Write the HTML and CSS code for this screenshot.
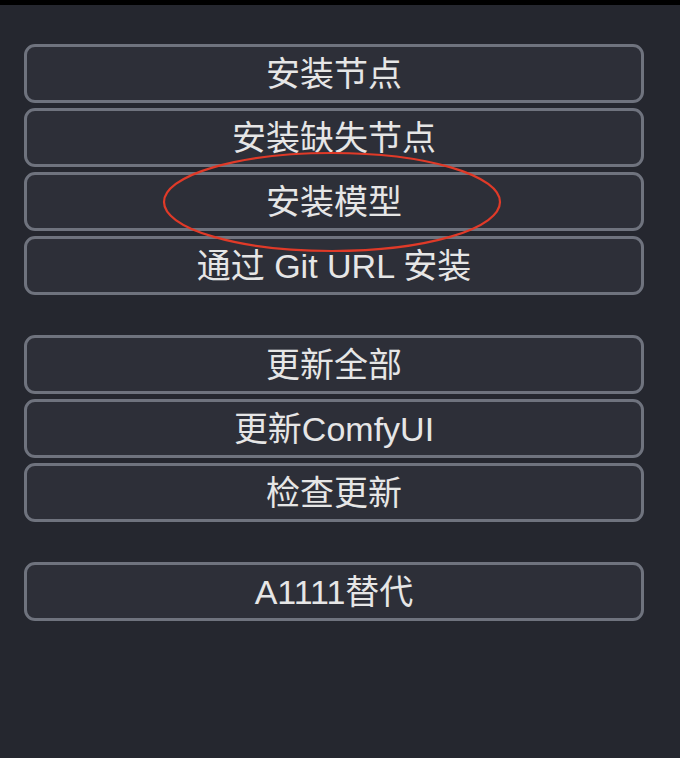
FILE: index.html
```html
<!DOCTYPE html>
<html lang="zh-CN">
<head>
<meta charset="utf-8">
<title>Manager</title>
<link rel="stylesheet" href="styles.css">
</head>
<body>
<div class="topbar"></div>
<main class="menu">
  <div class="group">
    <button class="btn">安装节点</button>
    <button class="btn">安装缺失节点</button>
    <button class="btn">安装模型</button>
    <button class="btn">通过 Git URL 安装</button>
  </div>
  <div class="group">
    <button class="btn">更新全部</button>
    <button class="btn">更新ComfyUI</button>
    <button class="btn">检查更新</button>
  </div>
  <div class="group">
    <button class="btn">A1111替代</button>
  </div>
  <svg class="annotation" width="344" height="104" viewBox="0 0 344 104">
    <ellipse cx="172" cy="52" rx="168" ry="49" fill="none" stroke="#e03a28" stroke-width="2.2"/>
  </svg>
</main>
</body>
</html>
```

FILE: styles.css
```css
html, body {
  margin: 0;
  padding: 0;
  background: #25272f;
  height: 100%;
}
.topbar {
  height: 5px;
  background: #000;
}
.menu {
  position: relative;
  padding: 39px 0 0 24px;
  width: 620px;
  display: flex;
  flex-direction: column;
  gap: 40px;
}
.group {
  display: flex;
  flex-direction: column;
  gap: 5px;
}
.btn {
  box-sizing: border-box;
  height: 59px;
  width: 620px;
  margin: 0;
  padding: 0;
  border: 3px solid #6f737e;
  border-radius: 11px;
  background: #2d2f38;
  color: #e6e6e6;
  font-family: "Liberation Sans", "Noto Sans CJK SC", sans-serif;
  font-size: 34px;
  line-height: 1;
  text-align: center;
}
.annotation {
  position: absolute;
  left: 160px;
  top: 145px;
  pointer-events: none;
}
```
